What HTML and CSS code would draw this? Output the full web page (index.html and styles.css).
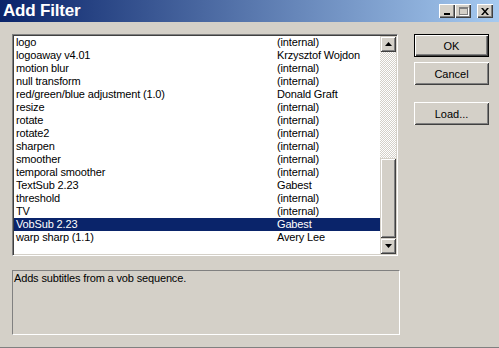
FILE: index.html
```html
<!DOCTYPE html>
<html lang="en">
<head>
  <meta charset="UTF-8">
  <title>Add Filter</title>
  <link rel="stylesheet" href="styles.css">
</head>
<body>
  <div class="window">
    <div class="titlebar">
      <span class="title">Add Filter</span>
      <div class="caption-buttons">
        <span class="cap-btn cap-min"><i></i></span>
        <span class="cap-btn cap-max"><i></i></span>
        <span class="cap-btn cap-close">
          <svg width="8" height="7" viewBox="0 0 8 7"><path d="M0 0h2l2 2.5L6 0h2L5 3.5 8 7H6L4 4.5 2 7H0l3-3.5z" fill="#000"/></svg>
        </span>
      </div>
    </div>

    <div class="dialog">
      <div class="left">
        <div class="listbox">
          <div class="items">
            <div class="item"><span>logo</span><span>(internal)</span></div>
            <div class="item"><span>logoaway v4.01</span><span>Krzysztof Wojdon</span></div>
            <div class="item"><span>motion blur</span><span>(internal)</span></div>
            <div class="item"><span>null transform</span><span>(internal)</span></div>
            <div class="item"><span>red/green/blue adjustment (1.0)</span><span>Donald Graft</span></div>
            <div class="item"><span>resize</span><span>(internal)</span></div>
            <div class="item"><span>rotate</span><span>(internal)</span></div>
            <div class="item"><span>rotate2</span><span>(internal)</span></div>
            <div class="item"><span>sharpen</span><span>(internal)</span></div>
            <div class="item"><span>smoother</span><span>(internal)</span></div>
            <div class="item"><span>temporal smoother</span><span>(internal)</span></div>
            <div class="item"><span>TextSub 2.23</span><span>Gabest</span></div>
            <div class="item"><span>threshold</span><span>(internal)</span></div>
            <div class="item"><span>TV</span><span>(internal)</span></div>
            <div class="item selected"><span>VobSub 2.23</span><span>Gabest</span></div>
            <div class="item"><span>warp sharp (1.1)</span><span>Avery Lee</span></div>
          </div>
          <div class="scrollbar">
            <div class="sb-btn">
              <svg width="7" height="4" viewBox="0 0 7 4"><path d="M3.5 0L7 4H0z" fill="#000"/></svg>
            </div>
            <div class="sb-track">
              <div class="sb-thumb"></div>
            </div>
            <div class="sb-btn">
              <svg width="7" height="4" viewBox="0 0 7 4"><path d="M0 0h7L3.5 4z" fill="#000"/></svg>
            </div>
          </div>
        </div>
        <div class="desc">Adds subtitles from a vob sequence.</div>
      </div>

      <div class="buttons">
        <button class="btn default">OK</button>
        <button class="btn">Cancel</button>
        <button class="btn load">Load...</button>
      </div>
    </div>
  </div>
</body>
</html>
```

FILE: styles.css
```css
/* base */
* {
  box-sizing: border-box;
  margin: 0;
  padding: 0;
}
body {
  font-family: "Liberation Sans", Arial, sans-serif;
  font-size: 11px;
  color: #000;
  background: #d4d0c8;
}
.window {
  width: 499px;
  height: 348px;
  background: #d4d0c8;
  border-bottom: 1px solid #808080;
}

/* title bar */
.titlebar {
  height: 22px;
  display: flex;
  align-items: center;
  justify-content: space-between;
  padding: 0 6px 0 3px;
  background: linear-gradient(to right, #0a246a, #a6caf0);
}
.title {
  color: #fff;
  font-size: 17px;
  font-weight: bold;
  letter-spacing: -0.2px;
}
.caption-buttons {
  display: flex;
  align-items: center;
}
.cap-btn {
  width: 16px;
  height: 14px;
  display: flex;
  align-items: center;
  justify-content: center;
  background: #d4d0c8;
  box-shadow: inset 1px 1px #fff, inset -1px -1px #404040, inset -2px -2px #808080;
}
.cap-min i {
  width: 6px;
  height: 2px;
  background: #000;
  margin-top: 6px;
  margin-left: -1px;
}
.cap-max i {
  width: 9px;
  height: 8px;
  border: 1px solid #808080;
  border-top-width: 2px;
  box-shadow: 1px 1px #fff;
}
.cap-close {
  margin-left: 6px;
}

/* layout */
.dialog {
  display: grid;
  grid-template-columns: 386px 75px;
  column-gap: 16px;
  padding: 12px 0 0 12px;
}

/* list */
.listbox {
  height: 222px;
  display: flex;
  background: #fff;
  border: 1px solid;
  border-color: #808080 #fff #fff #808080;
  box-shadow: inset 1px 1px #404040, inset -1px -1px #d4d0c8;
  padding: 1px;
}
.items {
  flex: 1;
}
.item {
  height: 13px;
  line-height: 13px;
  display: grid;
  grid-template-columns: 261px 1fr;
  padding-left: 2px;
  white-space: nowrap;
  letter-spacing: -0.15px;
}
.item.selected {
  background: #0a246a;
  color: #fff;
}

/* scrollbar */
.scrollbar {
  width: 16px;
  display: flex;
  flex-direction: column;
}
.sb-btn {
  height: 16px;
  display: flex;
  align-items: center;
  justify-content: center;
  background: #d4d0c8;
  box-shadow: inset 1px 1px #d4d0c8, inset -1px -1px #404040, inset 2px 2px #fff, inset -2px -2px #808080;
}
.sb-track {
  flex: 1;
  display: flex;
  flex-direction: column;
  justify-content: flex-end;
  background-color: #fff;
  background-image: conic-gradient(#d4d0c8 25%, #fff 0 50%, #d4d0c8 0 75%, #fff 0);
  background-size: 2px 2px;
}
.sb-thumb {
  height: 80px;
  background: #d4d0c8;
  box-shadow: inset 1px 1px #d4d0c8, inset -1px -1px #404040, inset 2px 2px #fff, inset -2px -2px #808080;
}

/* description */
.desc {
  width: 388px;
  height: 65px;
  margin-top: 14px;
  padding: 1px 0 0 1px;
  border: 1px solid;
  border-color: #808080 #fff #fff #808080;
  line-height: 13px;
  letter-spacing: -0.15px;
}

/* buttons */
.buttons {
  display: flex;
  flex-direction: column;
  gap: 5px;
}
.btn {
  width: 75px;
  height: 23px;
  font-family: inherit;
  font-size: 11px;
  color: #000;
  background: #d4d0c8;
  border: none;
  box-shadow: inset 1px 1px #fff, inset -1px -1px #404040, inset 2px 2px #d4d0c8, inset -2px -2px #808080;
}
.btn.default {
  border: 1px solid #000;
  box-shadow: inset 1px 1px #fff, inset -1px -1px #404040, inset -2px -2px #808080;
}
.btn.load {
  margin-top: 12px;
}
```
